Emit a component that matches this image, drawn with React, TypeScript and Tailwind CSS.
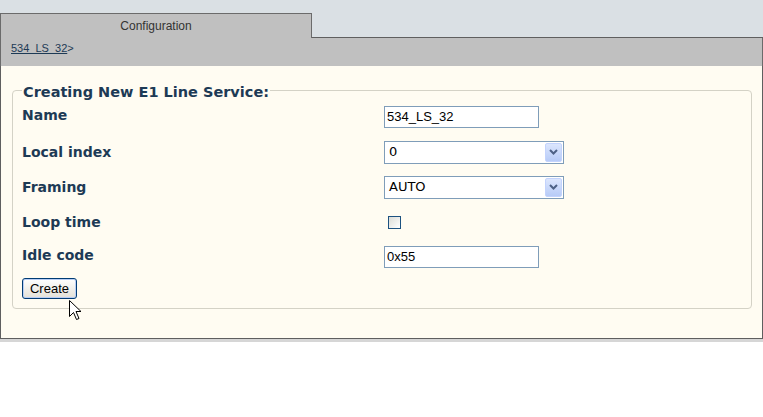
import React from 'react'

const navy = 'text-[#1d3a55]'

function Row({ label, h, mt, lift, children }: { label: string; h: string; mt: string; lift?: boolean; children: React.ReactNode }) {
  return (
    <div className={`flex items-center ${h} ${mt}`}>
      <div className={`w-[362px] font-bold text-[14px] leading-[18px] ${navy} ${lift ? 'pb-[4px]' : ''}`}>{label}</div>
      {children}
    </div>
  )
}

function FakeSelect({ value }: { value: string }) {
  return (
    <div className="flex h-[23px] w-[180px] items-center border border-[#7f9db9] bg-white pl-[4px] pr-[1px] text-[13px] text-black">
      <span className="flex-1">{value}</span>
      <span className="flex h-[19px] w-[17px] items-center justify-center rounded-[2px] border border-[#c3d3fd] bg-gradient-to-b from-[#dce6fd] to-[#b7cbf7]">
        <svg width="9" height="6" viewBox="0 0 9 6">
          <path d="M1 1 L4.5 4.5 L8 1" stroke="#4d6185" strokeWidth="2" fill="none" />
        </svg>
      </span>
    </div>
  )
}

export default function App() {
  return (
    <div className="w-[763px] h-[417px] bg-white font-['Liberation_Sans',Arial,sans-serif]">
      <div className="flex h-[38px] items-end bg-[#dae0e4]">
        <div className="flex h-[25px] w-[312px] items-center justify-center border-l border-r border-t border-[#6b6b6b] bg-[#c0c0c0] text-[12px] text-[#333]">
          Configuration
        </div>
        <div className="h-[1px] flex-1 bg-[#5f5f5f]"></div>
      </div>
      <div className="h-[28px] border-l border-r border-[#6b6b6b] bg-[#c0c0c0] pl-[10px] pt-[3px] text-[11px] leading-[14px] text-[#1d3a55]">
        <a href="#" className="underline">534_LS_32</a>&gt;
      </div>
      <div className="border-b border-l border-r border-[#5f5f5f] bg-[#fffcf2] pb-[29px] pl-[11px] pr-[10px] pt-[13px]">
        <fieldset className="rounded-[4px] border border-[#d4d2c6] pb-[9px] pl-[9px] pt-[3px] font-['DejaVu_Sans',Verdana,sans-serif]">
          <legend className={`px-[1px] pt-[4px] text-[14.5px] font-bold leading-[18px] ${navy}`}>Creating New E1 Line Service:</legend>
          <Row label="Name" h="h-[25px]" mt="" lift>
            <input
              readOnly
              value="534_LS_32"
              className="h-[22px] w-[155px] border border-[#7f9db9] bg-white px-[2px] font-['Liberation_Sans',Arial,sans-serif] text-[13px] text-black outline-none"
            />
          </Row>
          <Row label="Local index" h="h-[26px]" mt="mt-[10px]">
            <FakeSelect value="0" />
          </Row>
          <Row label="Framing" h="h-[26px]" mt="mt-[9px]">
            <FakeSelect value="AUTO" />
          </Row>
          <Row label="Loop time" h="h-[26px]" mt="mt-[9px]">
            <span className="ml-[4px] h-[13px] w-[13px] border border-[#1c5180] bg-gradient-to-br from-[#dcdcd6] to-white"></span>
          </Row>
          <Row label="Idle code" h="h-[25px]" mt="mt-[9px]" lift>
            <input
              readOnly
              value="0x55"
              className="h-[22px] w-[155px] border border-[#7f9db9] bg-white px-[2px] font-['Liberation_Sans',Arial,sans-serif] text-[13px] text-black outline-none"
            />
          </Row>
          <div className="relative mt-[9px] flex h-[21px]">
            <button className="h-[21px] w-[55px] rounded-[3px] border border-[#003c74] bg-gradient-to-b from-white to-[#e3e1d8] font-['Liberation_Sans',Arial,sans-serif] text-[13px] leading-[17px] text-black shadow-[inset_0_0_0_1px_#b9cef5]">
              Create
            </button>
            <svg className="absolute left-[47px] top-[22px]" width="13" height="21" viewBox="0 0 13 21">
              <path d="M0.5 0.5 L0.5 16.5 L4.5 12.5 L7.5 19.5 L10 18.5 L7 11.5 L12 11.5 Z" fill="white" stroke="black" strokeWidth="1" />
            </svg>
          </div>
        </fieldset>
      </div>
      <div className="h-[3px] bg-[#d6d6d6]"></div>
    </div>
  )
}
